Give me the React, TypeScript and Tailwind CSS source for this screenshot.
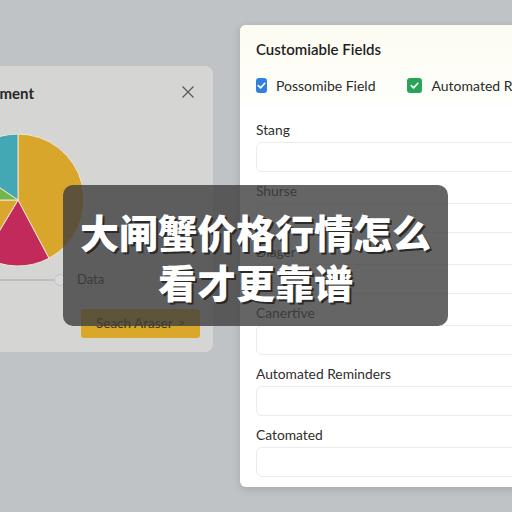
import React from 'react'

const fields = ['Stang', 'Shurse', 'Diager', 'Canertive', 'Automated Reminders', 'Catomated']

// pie slices in degrees, 0 = 3 o'clock, clockwise
const slices = [
  { from: -90, to: 62, color: '#d9a62c' },
  { from: 62, to: 121, color: '#c22a5b' },
  { from: 121, to: 180, color: '#dba62e' },
  { from: 180, to: 214, color: '#6fb64c' },
  { from: 214, to: 270, color: '#43a8b4' },
]

function arc(cx: number, cy: number, r: number, a0: number, a1: number) {
  const rad = (a: number) => (a * Math.PI) / 180
  const x0 = cx + r * Math.cos(rad(a0))
  const y0 = cy + r * Math.sin(rad(a0))
  const x1 = cx + r * Math.cos(rad(a1))
  const y1 = cy + r * Math.sin(rad(a1))
  const large = a1 - a0 > 180 ? 1 : 0
  return `M${cx} ${cy} L${x0} ${y0} A${r} ${r} 0 ${large} 1 ${x1} ${y1} Z`
}

function PieChart() {
  return (
    <svg width="134" height="134" viewBox="0 0 134 134">
      {slices.map((s) => (
        <path key={s.from} d={arc(67, 67, 66, s.from, s.to)} fill={s.color} stroke="#efe6cf" strokeWidth="1" />
      ))}
    </svg>
  )
}

function Check({ color }: { color: string }) {
  return (
    <span className={`flex h-[15px] w-[15px] items-center justify-center rounded-[3px] ${color}`}>
      <svg width="11" height="11" viewBox="0 0 12 12" fill="none">
        <path d="M2.5 6.2 5 8.6 9.6 3.6" stroke="white" strokeWidth="1.8" strokeLinecap="round" strokeLinejoin="round" />
      </svg>
    </span>
  )
}

export default function App() {
  return (
    <div
      className="relative flex h-[512px] w-[512px] overflow-hidden bg-[#c0c3c6]"
      style={{ fontFamily: 'Lato, "Liberation Sans", sans-serif' }}
    >
      {/* report panel, runs off the left edge */}
      <div className="ml-[-70px] mt-[66px] h-[286px] w-[283px] shrink-0 rounded-lg bg-[#d5d5d4]">
        <div className="flex h-[54px] items-center justify-between pl-[16px] pr-[18px]">
          <span className="text-[15px] font-bold text-[#262626]">Management</span>
          <svg width="14" height="14" viewBox="0 0 14 14" className="mt-[-3px]">
            <path d="M1.5 1.5 12.5 12.5 M12.5 1.5 1.5 12.5" stroke="#5a5a5a" strokeWidth="1.3" />
          </svg>
        </div>
        <div className="ml-[21px] mt-[13px]">
          <PieChart />
        </div>
        <div className="mt-[5px] flex h-[16px] items-center">
          <div className="ml-[70px] h-[2px] w-[54px] bg-[#bdbdbd]" />
          <div className="h-[12px] w-[12px] rounded-full border border-[#c4c4c4] bg-[#dadada]" />
          <span className="ml-[11px] text-[13px] text-[#2a2a2a]">Data</span>
        </div>
        <div className="ml-[151px] mt-[21px] flex h-[29px] w-[119px] items-center justify-center rounded-[3px] bg-[#d9a82b] text-[13.5px] text-[#3b3320]">
          Seach Araser <span className="ml-[6px] text-[11px]">&gt;</span>
        </div>
      </div>

      {/* fields card */}
      <div className="ml-[27px] mt-[25px] h-[462px] w-[300px] shrink-0 overflow-hidden rounded-md bg-white shadow-[0_2px_8px_rgba(0,0,0,0.15)]">
        <div className="h-[82px] bg-gradient-to-b from-[#fdfcf2] to-[#fefefb] pl-[16px] pt-[14px]">
          <div className="text-[15px] font-semibold leading-[20px] text-[#1f1f1f]">Customiable Fields</div>
          <div className="mt-[16px] flex items-center whitespace-nowrap text-[14px] text-[#2b2b2b]">
            <Check color="bg-[#2f80e0]" />
            <span className="ml-[9px]">Possomibe Field</span>
            <span className="ml-[31px]">
              <Check color="bg-[#27a457]" />
            </span>
            <span className="ml-[10px]">Automated Reminders</span>
          </div>
        </div>
        <div className="flex flex-col gap-[11px] pl-[16px] pt-[15px]">
          {fields.map((f) => (
            <div key={f}>
              <div className="mb-[4px] text-[13.8px] leading-[16px] text-[#2e2e2e]">{f}</div>
              <div className="h-[30px] w-full rounded-md border border-[#ebebeb] bg-white" />
            </div>
          ))}
        </div>
      </div>

      {/* caption overlay */}
      <div className="absolute left-[63px] top-[185px] flex h-[141px] w-[385px] flex-col items-center justify-center rounded-[10px] bg-[rgba(62,62,62,0.8)]">
        <div
          className="text-center text-[39px] font-black leading-[50px] text-white [text-shadow:2px_2px_0_#2a2a2a]"
          style={{ fontFamily: '"Noto Sans CJK SC", sans-serif' }}
        >
          <div>大闸蟹价格行情怎么</div>
          <div>看才更靠谱</div>
        </div>
      </div>
    </div>
  )
}
